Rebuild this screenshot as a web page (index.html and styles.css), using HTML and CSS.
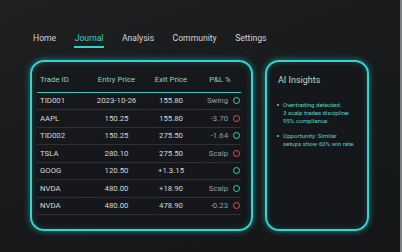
FILE: index.html
```html
<!DOCTYPE html>
<html lang="en">
<head>
	<meta charset="UTF-8">
	<title>Trade Journal</title>
	<link rel="stylesheet" href="styles.css">
</head>
<body>
	<div class="page">
		<ul class="nav">
			<li><a href="#">Home</a></li>
			<li><a href="#" class="cur">Journal</a></li>
			<li><a href="#">Analysis</a></li>
			<li><a href="#">Community</a></li>
			<li><a href="#">Settings</a></li>
		</ul>
		<div class="main">
			<div class="card journal">
				<table class="trades">
					<thead>
						<tr>
							<th class="c_id">Trade ID</th>
							<th>Entry Price</th>
							<th>Exit Price</th>
							<th>P&amp;L %</th>
						</tr>
					</thead>
					<tbody>
						<tr>
							<td class="c_id">TID001</td>
							<td>2023-10-26</td>
							<td>155.80</td>
							<td class="pl">Swing <i class="dot up"></i></td>
						</tr>
						<tr>
							<td class="c_id">AAPL</td>
							<td>150.25</td>
							<td>155.80</td>
							<td class="pl">-3.70 <i class="dot down"></i></td>
						</tr>
						<tr>
							<td class="c_id">TID002</td>
							<td>150.25</td>
							<td>275.50</td>
							<td class="pl">-1.64 <i class="dot up"></i></td>
						</tr>
						<tr>
							<td class="c_id">TSLA</td>
							<td>280.10</td>
							<td>275.50</td>
							<td class="pl">Scalp <i class="dot down"></i></td>
						</tr>
						<tr>
							<td class="c_id">GOOG</td>
							<td>120.50</td>
							<td>+1.3.15</td>
							<td class="pl"><i class="dot up"></i></td>
						</tr>
						<tr>
							<td class="c_id">NVDA</td>
							<td>480.00</td>
							<td>+18.90</td>
							<td class="pl">Scalp <i class="dot up"></i></td>
						</tr>
						<tr>
							<td class="c_id">NVDA</td>
							<td>480.00</td>
							<td>478.90</td>
							<td class="pl">-0.23 <i class="dot down"></i></td>
						</tr>
					</tbody>
				</table>
			</div>
			<div class="card insights">
				<h3>AI Insights</h3>
				<ul>
					<li>Overtrading detected:<br>3 scalp trades discipline:<br>95% compliance.</li>
					<li>Opportunity: Similar<br>setups show 60% win rate.</li>
				</ul>
			</div>
		</div>
	</div>
</body>
</html>
```

FILE: styles.css
```css
*{
	margin: 0;
	padding: 0;
	box-sizing: border-box;
}
html,body{
	height: 100%;
}
body{
	font-family: Roboto, "Liberation Sans", sans-serif;
	background: linear-gradient(160deg, #1e2022 0%, #17191b 55%, #141618 100%);
	border-right: 2px solid #7e8184;
	overflow: hidden;
}
.page{
	padding: 32px 0 0 30px;
}
.nav{
	list-style: none;
	display: flex;
	gap: 18.5px;
	margin-left: 3px;
	height: 28px;
}
.nav a{
	display: block;
	font-size: 8.6px;
	line-height: 13px;
	color: #d3d6d8;
	text-decoration: none;
	padding-bottom: 1px;
}
.nav a.cur{
	color: #3fd2cf;
	border-bottom: 2px solid #31d3cf;
	margin: 0 -1px;
	padding: 0 1px 1px;
}
.main{
	display: flex;
	gap: 12px;
}
.card{
	height: 171px;
	border: 2px solid #31d6d2;
	border-radius: 14px;
	background: rgba(20, 22, 25, 0.55);
	box-shadow: 0 0 6px rgba(49, 214, 210, 0.55), inset 0 0 6px rgba(49, 214, 210, 0.25);
}
.journal{
	width: 223px;
	padding: 6px 10px 0 5px;
}
.trades{
	width: 100%;
	border-collapse: collapse;
	font-size: 7.8px;
}
.trades th{
	height: 24px;
	font-weight: normal;
	color: #7fd8ce;
	border-bottom: 1.5px solid #3cc9c1;
	text-align: center;
}
.trades td{
	height: 17.5px;
	color: #d6d9db;
	text-align: center;
	border-bottom: 1px solid #2e3134;
}
.trades .c_id{
	width: 53px;
	text-align: left;
	padding-left: 3px;
}
.trades th:nth-child(2){
	width: 53px;
}
.trades th:nth-child(3){
	width: 56px;
}
.trades td.pl{
	text-align: right;
	color: #9a9ea1;
	padding-right: 1px;
	white-space: nowrap;
}
.dot{
	display: inline-block;
	width: 7px;
	height: 7px;
	margin-left: 3px;
	border-radius: 50%;
	border: 1.8px solid #2fd9a6;
	vertical-align: -1px;
}
.dot.down{
	border-color: #e2505a;
}
.insights{
	width: 104px;
	padding: 12px 6px 0 11px;
}
.insights h3{
	font-size: 9px;
	font-weight: normal;
	color: #b6d9d5;
	line-height: 12px;
	margin-bottom: 15px;
}
.insights ul{
	list-style: none;
}
.insights li{
	position: relative;
	padding-left: 5px;
	font-size: 6.1px;
	line-height: 8px;
	color: #58d3cb;
	margin-bottom: 7px;
	white-space: nowrap;
}
.insights li:before{
	content: "";
	position: absolute;
	left: -1px;
	top: 3px;
	width: 2px;
	height: 2px;
	border-radius: 50%;
	background-color: #58d3cb;
}
```
